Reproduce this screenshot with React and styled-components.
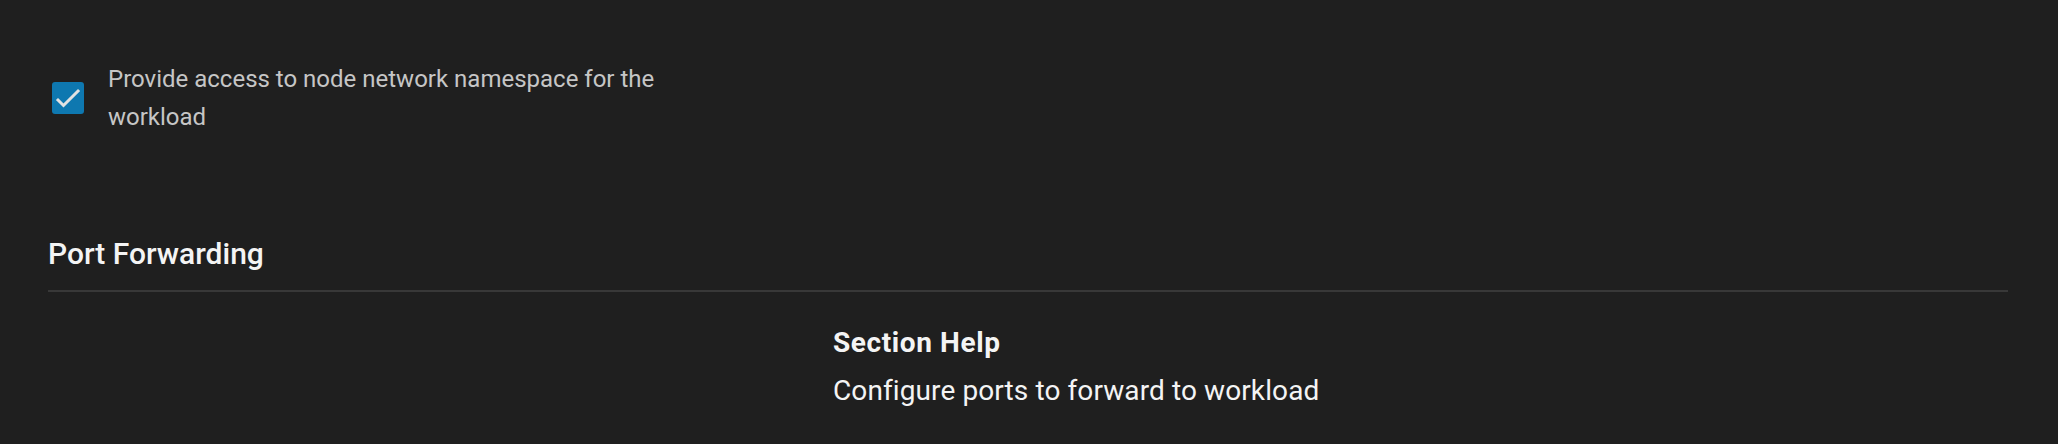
import styled, { createGlobalStyle } from 'styled-components'

const GlobalStyle = createGlobalStyle`
  html, body {
    margin: 0;
    padding: 0;
    background: #1f1f1f;
  }
  body {
    font-family: Roboto, "Liberation Sans", Arial, sans-serif;
    -webkit-font-smoothing: antialiased;
  }
`

const App = () => {
  return (
    <Page>
      <GlobalStyle />
      <CheckRow>
        <Box role="checkbox" aria-checked="true">
          <svg width="32" height="32" viewBox="0 0 32 32" fill="none">
            <path d="M6 18 L11.5 23.5 L26 9" stroke="#e2e2e2" strokeWidth="3" strokeLinecap="square" />
          </svg>
        </Box>
        <Label>Provide access to node network namespace for the workload</Label>
      </CheckRow>

      <SectionTitle>Port Forwarding</SectionTitle>

      <HelpGrid>
        <div />
        <Help>
          <HelpTitle>Section Help</HelpTitle>
          <HelpText>Configure ports to forward to workload</HelpText>
        </Help>
      </HelpGrid>
    </Page>
  )
}

const Page = styled.div`
  min-height: 444px;
  box-sizing: border-box;
  padding: 60px 50px 0 48px;
  background: #1f1f1f;
`

const CheckRow = styled.div`
  display: flex;
  align-items: center;
  gap: 24px;
  padding-left: 4px;
`

const Box = styled.div`
  flex: none;
  width: 32px;
  height: 32px;
  border-radius: 3px;
  background: #0e78b0;
  display: flex;
  align-items: center;
  justify-content: center;
`

const Label = styled.div`
  max-width: 570px;
  color: #c6c6c6;
  font-size: 24px;
  line-height: 38px;
`

const SectionTitle = styled.h2`
  margin: 98px 0 0;
  padding-bottom: 16px;
  border-bottom: 2px solid #383838;
  color: #f4f4f4;
  font-size: 30px;
  font-weight: 500;
  line-height: 40px;
`

const HelpGrid = styled.div`
  display: grid;
  grid-template-columns: 2fr 3fr;
  padding-top: 32px;
`

const Help = styled.div`
  display: flex;
  flex-direction: column;
  gap: 10px;
  margin-left: 1px;
`

const HelpTitle = styled.h3`
  margin: 0;
  color: #f4f4f4;
  font-size: 28px;
  font-weight: 700;
  line-height: 38px;
  letter-spacing: 0.6px;
`

const HelpText = styled.p`
  margin: 0;
  color: #f4f4f4;
  font-size: 28px;
  line-height: 38px;
  letter-spacing: 0.1px;
`

export default App
